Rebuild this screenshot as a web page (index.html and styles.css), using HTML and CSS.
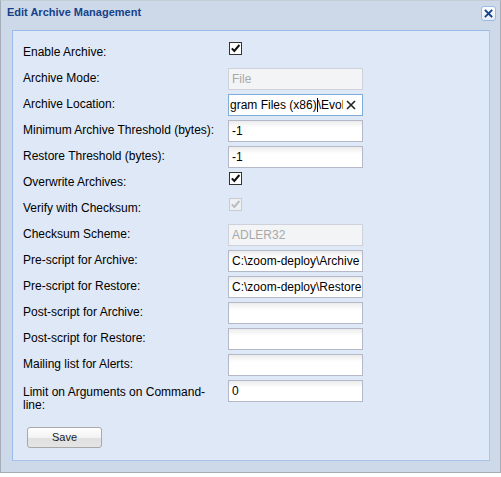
FILE: index.html
```html
<!DOCTYPE html>
<html>
<head>
<meta charset="utf-8">
<link rel="stylesheet" href="styles.css">
</head>
<body>
<div class="win">
  <div class="win-head">
    <span class="win-title">Edit Archive Management</span>
    <span class="win-close"><svg width="13" height="13" viewBox="0 0 13 13"><path d="M3.5 3.5L9.5 9.5M9.5 3.5L3.5 9.5" stroke="#15428b" stroke-width="1.8" stroke-linecap="square" fill="none"/></svg></span>
  </div>
  <div class="win-body">
    <div class="row"><label class="lbl">Enable Archive:</label><span class="cb"><svg width="11" height="11" viewBox="0 0 11 11"><path d="M1.8 5.4L4.3 8L9.4 2" stroke="#111" stroke-width="2" fill="none"/></svg></span></div>
    <div class="row"><label class="lbl">Archive Mode:</label><div class="fld dis">File</div></div>
    <div class="row"><label class="lbl">Archive Location:</label><div class="fld focus"><span class="ftext">gram Files (x86)<span class="caret"></span>\Evol</span><svg class="clr" width="10" height="10" viewBox="0 0 10 10"><path d="M1 1L9 9M9 1L1 9" stroke="#222" stroke-width="1.6" fill="none"/></svg></div></div>
    <div class="row"><label class="lbl">Minimum Archive Threshold (bytes):</label><div class="fld">-1</div></div>
    <div class="row"><label class="lbl">Restore Threshold (bytes):</label><div class="fld">-1</div></div>
    <div class="row"><label class="lbl">Overwrite Archives:</label><span class="cb"><svg width="11" height="11" viewBox="0 0 11 11"><path d="M1.8 5.4L4.3 8L9.4 2" stroke="#111" stroke-width="2" fill="none"/></svg></span></div>
    <div class="row"><label class="lbl">Verify with Checksum:</label><span class="cb cb-dis"><svg width="11" height="11" viewBox="0 0 11 11"><path d="M1.8 5.4L4.3 8L9.4 2" stroke="#b8bcc4" stroke-width="2" fill="none"/></svg></span></div>
    <div class="row"><label class="lbl">Checksum Scheme:</label><div class="fld dis">ADLER32</div></div>
    <div class="row"><label class="lbl">Pre-script for Archive:</label><div class="fld">C:\zoom-deploy\Archive</div></div>
    <div class="row"><label class="lbl">Pre-script for Restore:</label><div class="fld">C:\zoom-deploy\Restore</div></div>
    <div class="row"><label class="lbl">Post-script for Archive:</label><div class="fld"></div></div>
    <div class="row"><label class="lbl">Post-script for Restore:</label><div class="fld"></div></div>
    <div class="row"><label class="lbl">Mailing list for Alerts:</label><div class="fld"></div></div>
    <div class="row"><label class="lbl">Limit on Arguments on Command-line:</label><div class="fld">0</div></div>
    <div class="btn-row"><button class="btn">Save</button></div>
  </div>
</div>
</body>
</html>
```
FILE: styles.css
```css
html, body {
  margin: 0;
  padding: 0;
  background: #ffffff;
}
.win {
  box-sizing: border-box;
  width: 501px;
  height: 473px;
  border: 1px solid #a4acb8;
  border-top-color: #c4ccd6;
  background: #cdd9e8;
  box-shadow: 0 2px 2px rgba(0,0,0,0.12);
  font-family: "Liberation Sans", Arial, sans-serif;
}
.win-head {
  height: 29px;
  display: flex;
  justify-content: space-between;
  align-items: flex-start;
  padding: 0 4px 0 6px;
}
.win-title {
  font-weight: bold;
  font-size: 11px;
  color: #15428b;
  line-height: 13px;
  padding-top: 5px;
}
.win-close {
  box-sizing: border-box;
  width: 15px;
  height: 15px;
  margin-top: 5px;
  border: 1px solid #99bbe8;
  border-radius: 3px;
  background: linear-gradient(#ffffff, #e4ecf8);
  display: flex;
  align-items: center;
  justify-content: center;
}
.win-body {
  box-sizing: border-box;
  margin-left: 11px;
  width: 478px;
  height: 431px;
  border: 1px solid #99bbe8;
  border-right-color: #a8c4ec;
  border-bottom-color: #a8c4ec;
  background: #dfe8f6;
  padding: 11px 0 0 10px;
}
.row {
  display: flex;
  align-items: flex-start;
  min-height: 22px;
  margin-bottom: 4px;
}
.lbl {
  box-sizing: border-box;
  width: 200px;
  flex: none;
  padding-top: 4px;
  font-size: 12px;
  line-height: 12px;
  color: #000;
}
.row:nth-last-child(2) .lbl {
  padding-top: 6px;
  line-height: 13px;
}
.cb {
  box-sizing: border-box;
  width: 13px;
  height: 13px;
  margin-left: 6px;
  margin-top: 0;
  border: 1px solid #333;
  background: #fff;
  display: flex;
  align-items: center;
  justify-content: center;
}
.cb-dis {
  border-color: #c8ccd2;
  background: #eef0f2;
}
.fld {
  box-sizing: border-box;
  width: 135px;
  height: 22px;
  margin-left: 5px;
  border: 1px solid #b5b8c8;
  background: linear-gradient(#ececec 0, #ffffff 7px);
  font-size: 12px;
  line-height: 20px;
  padding-left: 3px;
  color: #000;
  white-space: nowrap;
  overflow: hidden;
}
.fld.dis {
  border-color: #cdd1d9;
  background: #f3f4f6;
  color: #a8a8a8;
}
.fld.focus {
  border-color: #7eadd9;
  background: #ffffff;
  display: flex;
  align-items: center;
  padding-left: 1px;
}
.ftext {
  overflow: hidden;
  width: 113px;
  flex: none;
}
.caret {
  display: inline-block;
  width: 0;
  height: 14px;
  border-left: 1px solid #000;
  vertical-align: -3px;
}
.clr {
  margin-left: 3px;
  flex: none;
}
.btn-row {
  margin-top: 15px;
  padding-left: 4px;
}
.btn {
  box-sizing: border-box;
  width: 75px;
  height: 21px;
  border: 1px solid #a8a8a8;
  border-radius: 3px;
  background: linear-gradient(#ffffff 0, #f2f2f2 50%, #e0e0e0 51%, #e4e4e4 100%);
  font-family: "Liberation Sans", Arial, sans-serif;
  font-size: 11px;
  color: #222;
  padding: 0;
  line-height: 19px;
}
```
